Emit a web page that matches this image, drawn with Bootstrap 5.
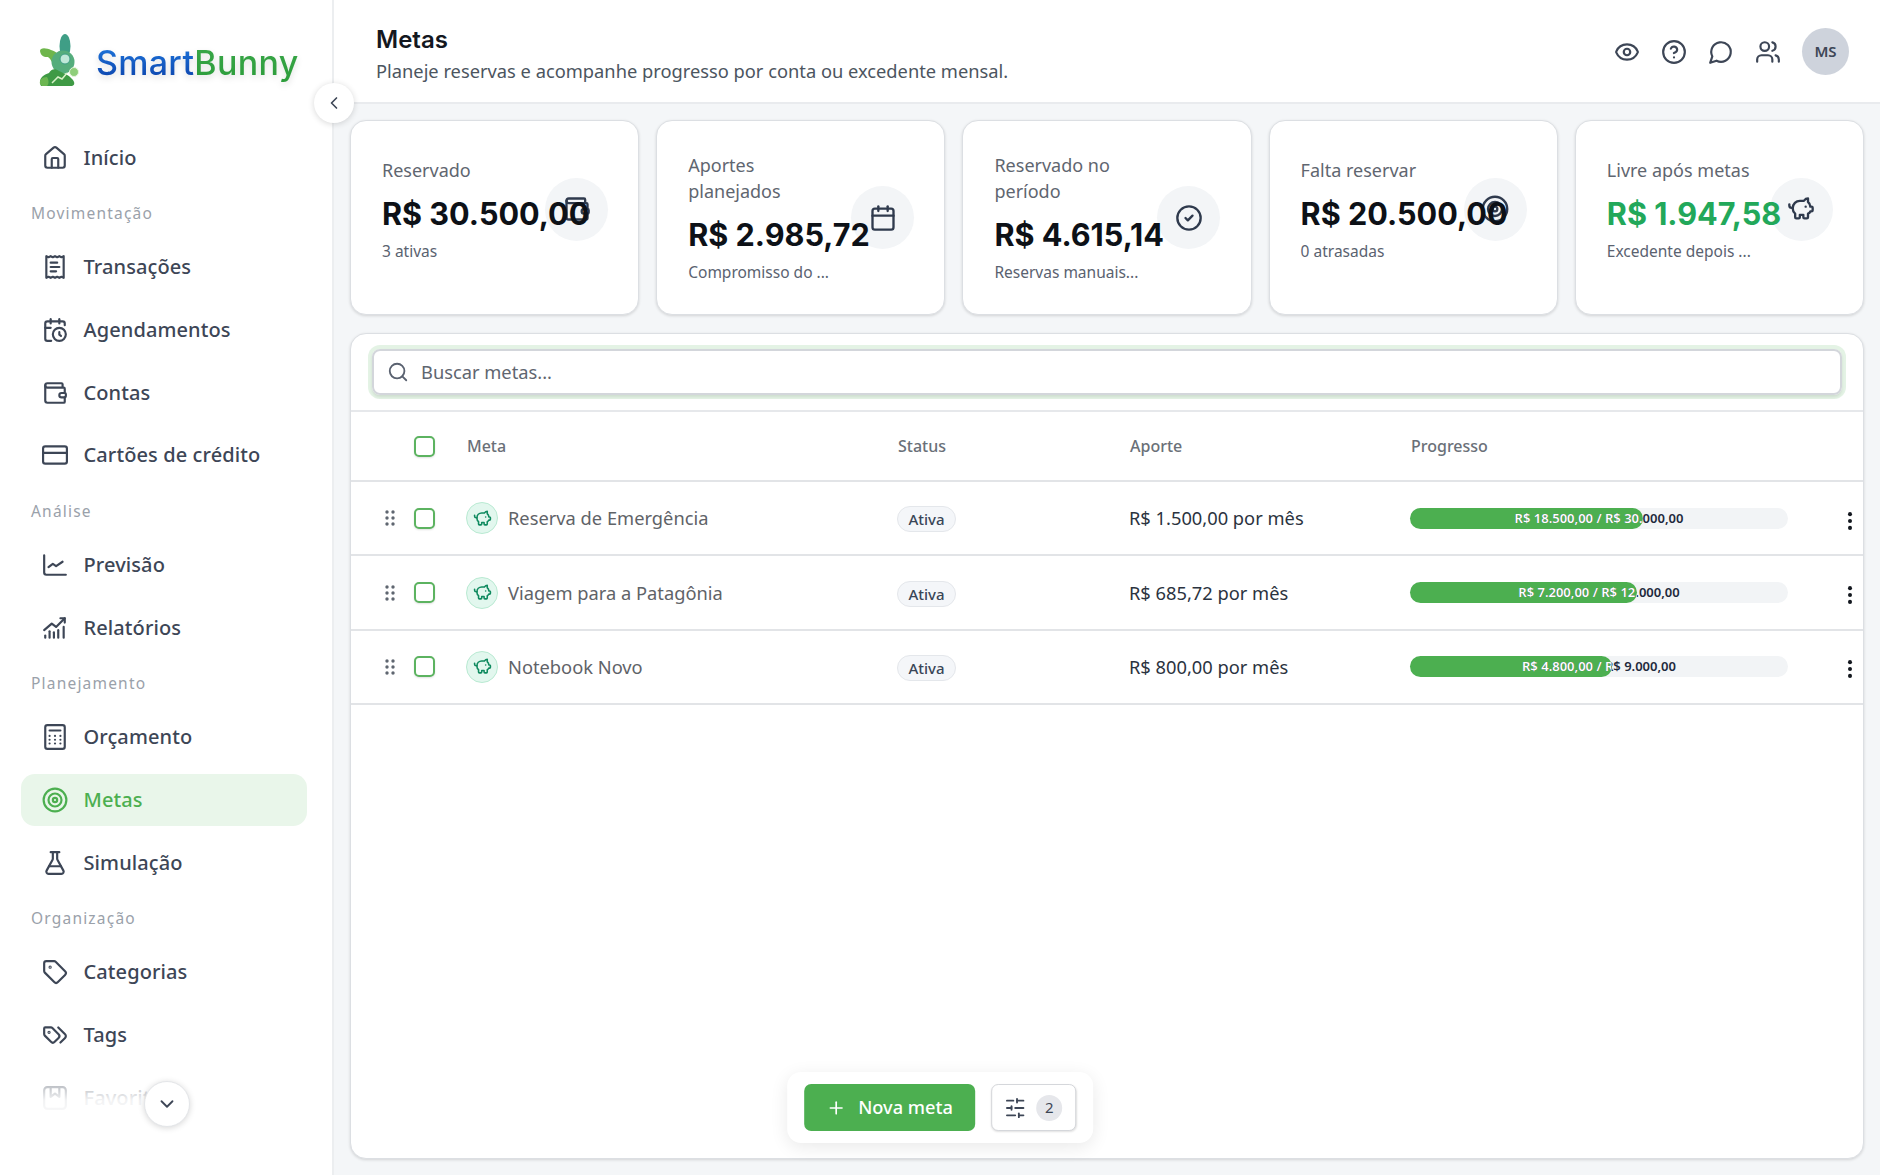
<!DOCTYPE html>
<html lang="pt-BR">

<head>
    <meta charset="UTF-8">
    <title>Metas - SmartBunny</title>
    <link rel="stylesheet" href="https://cdn.jsdelivr.net/npm/bootstrap@5.3.0/dist/css/bootstrap.min.css">
    <style>
        body { font-family: "Noto Sans", sans-serif; background: #f4f6f8; color: #2b3340; height: 1175px; }
        .ic { fill: none; stroke: currentColor; stroke-width: 2; stroke-linecap: round; stroke-linejoin: round; flex: none; }

        /* sidebar */
        .side { width: 334px; background: #fff; border-right: 2px solid #eceef0; height: 1175px; }
        .side-scroll { height: 1175px; overflow: hidden; }
        .brand { height: 131.500px; padding: 33px 0 0 39px; }
        .brand-name { font-family: Inter, sans-serif; font-weight: 500; font-size: 34px; line-height: 48px; letter-spacing: .3px; margin: 6px 0 0 17px; filter: drop-shadow(0 3px 3px rgba(0,0,0,.12)); }
        .brand-a { background: linear-gradient(180deg, #1f7ae0, #0b3fa8); -webkit-background-clip: text; background-clip: text; color: transparent; }
        .brand-b { background: linear-gradient(180deg, #3aa84a, #2c9c3a); -webkit-background-clip: text; background-clip: text; color: transparent; }
        .side-link { display: flex; align-items: center; height: 52px; margin: 0 25px 10.7px 21px; padding-left: 21px; gap: 15.500px; border-radius: 14px; color: #3d4656; font-size: 20px; letter-spacing: .1px; font-weight: 500; text-decoration: none; }
        .side-link.on { background: #e9f6ea; color: #4caf50; }
        .side-head { height: 38px; margin-bottom: 9px; padding-left: 31px; line-height: 38px; font-size: 15.500px; letter-spacing: 1.200px; color: #9aa1aa; }
        .side-fade { left: 0; bottom: 0; width: 332px; height: 125px; background: linear-gradient(180deg, rgba(255,255,255,0), rgba(255,255,255,.93) 40%, #fff 60%); pointer-events: none; }
        .round-btn { width: 40px; height: 40px; background: #fff; border: 0; border-radius: 50%; box-shadow: 0 1px 6px rgba(0,0,0,.16); color: #3d4656; display: flex; align-items: center; justify-content: center; padding: 0; }
        .collapse-btn { left: 314px; top: 83px; z-index: 5; }
        .more-btn { left: 144px; top: 1081px; width: 46px; height: 46px; border: 1px solid #e4e6e9; }

        /* header */
        .top { height: 104px; background: #fff; border-bottom: 2px solid #e9ebee; padding: 0 31px 0 42px; }
        .top-text { margin-top: 6px; }
        .top-title { font-family: Inter, sans-serif; font-weight: 600; font-size: 24px; line-height: 32px; color: #14181f; margin: 0; }
        .top-sub { font-size: 18.300px; line-height: 28px; color: #4c5560; margin: 1px 0 0; }
        .top-actions { color: #3d4656; gap: 21px; margin-top: 1px; }
        .avatar { width: 47px; height: 47px; background: #ced3dc; color: #3d4656; border-radius: 50%; font-size: 15px; font-weight: 600; }

        /* cards */
        .main-wrap { padding: 16px 16px 17px; gap: 18px; }
        .stats { gap: 17px; }
        .stat { flex: 1 1 0; height: 195px; background: #fff; border: 1px solid #dcdfe3; border-radius: 16px; box-shadow: 0 1px 3px rgba(0,0,0,.14); padding: 0 31px; min-width: 0; }
        .stat-single { padding-bottom: 17px; }
        .stat-text { width: 153px; flex: none; position: relative; z-index: 1; }
        .stat-label { font-size: 18px; line-height: 26px; color: #5f6670; }
        .stat-value { font-family: Inter, sans-serif; font-weight: 700; font-size: 30.600px; line-height: 42px; color: #0d1117; white-space: nowrap; margin: 10px 0 5px; }
        .stat-value.good { color: #22a85a; }
        .stat-note { font-size: 15.500px; line-height: 22px; color: #5a6270; white-space: nowrap; }
        .stat-ic { width: 63px; height: 63px; background: #f3f5f7; border-radius: 50%; color: #2f3a4d; flex: none; margin-left: 10px; }

        /* table panel */
        .panel { background: #fff; border: 1px solid #dcdfe3; border-radius: 16px; box-shadow: 0 1px 3px rgba(0,0,0,.14); height: 826px; overflow: hidden; }
        .search-bar { height: 78px; padding: 15px 21px 0; border-bottom: 2px solid #e6e8eb; }
        .search-box { height: 46px; border: 2px solid #d3d6db; border-radius: 8px; box-shadow: 0 0 0 4px rgba(76,175,80,.15), 0 2px 3px rgba(0,0,0,.1); padding-left: 13px; gap: 10px; color: #5a6270; }
        .search-box input { border: 0; outline: 0; flex: 1; font-size: 18.300px; color: #5a6270; background: transparent; }
        .search-box input::placeholder { color: #5f6670; opacity: 1; }
        .goal-table { table-layout: fixed; width: 100%; margin: 0; }
        .goal-table th { height: 69px; font-size: 16px; font-weight: 500; color: #6a7078; border-bottom: 2px solid #e2e4e7; padding: 0; vertical-align: middle; }
        .goal-table th + th + th { padding-left: 1px; }
        .goal-table td { height: 74.400px; border-bottom: 2px solid #e2e4e7; padding: 0; vertical-align: middle; font-size: 18.300px; color: #2b3340; }
        .w-sel { width: 116px; }
        .w-meta { width: 430px; }
        .w-status { width: 232px; }
        .w-aporte { width: 281px; }
        .w-prog { width: 377px; }
        .sel-cell { display: flex; align-items: center; padding-left: 29px; gap: 14px; }
        .sel-cell.head { padding-left: 63px; }
        .grip { color: #5f6670; fill: currentColor; stroke: none; }
        .form-check-input.pick { width: 21px; height: 21px; margin: 0; border: 2px solid #5cb360; border-radius: 5px; box-shadow: 0 1px 2px rgba(0,0,0,.12); }
        .goal-ic { width: 32px; height: 32px; background: #e2f7ee; border: 1px solid #b9ead2; border-radius: 50%; color: #0f8a5f; flex: none; margin-left: -1px; }
        .goal-name { color: #5f6368; margin-left: 10px; }
        .state { display: inline-block; height: 26px; line-height: 24px; padding: 0 10.500px; font-size: 15px; font-weight: 500; color: #3a4657; background: #f4f6f9; border: 1px solid #e4e7eb; border-radius: 13px; }
        .bar { height: 21px; background: #f2f4f6; border-radius: 11px; position: relative; width: 378px; }
        .bar-text { position: absolute; left: 0; top: 0; width: 100%; height: 21px; line-height: 21px; text-align: center; font-size: 13px; font-weight: 600; color: #1f2a3d; white-space: nowrap; }
        .bar-text.over { color: #fff; }
        .bar-fill { height: 21px; background: #4caf50; border-radius: 11px; }
        .kebab { color: #14181f; margin-left: 52px; }

        /* floating actions */
        .float-bar { bottom: 32px; background: #fff; border-radius: 14px; box-shadow: 0 4px 18px rgba(0,0,0,.09); padding: 12px 17px; gap: 16px; z-index: 4; }
        .btn-new { height: 47px; background: #4caf50; border: 0; border-radius: 7px; color: #fff; font-size: 18.200px; font-weight: 500; padding: 0 22px; gap: 12px; }
        .btn-new:hover { background: #4caf50; color: #fff; }
        .btn-filter { height: 47px; width: 85px; background: #fff; border: 1px solid #d5d7db; border-radius: 7px; box-shadow: 0 1px 2px rgba(0,0,0,.12); gap: 10px; color: #3d4656; padding: 0; }
        .count { width: 26px; height: 26px; background: #e6e7eb; border-radius: 50%; font-size: 15px; color: #3d4656; }
    </style>
</head>

<body class="position-relative overflow-hidden">
    <!-- icones no estilo lucide -->
    <svg width="0" height="0" class="position-absolute">
        <symbol id="i-home" viewBox="0 0 24 24"><path d="M15 21v-8a1 1 0 0 0-1-1h-4a1 1 0 0 0-1 1v8"/><path d="M3 10a2 2 0 0 1 .709-1.528l7-5.999a2 2 0 0 1 2.582 0l7 5.999A2 2 0 0 1 21 10v9a2 2 0 0 1-2 2H5a2 2 0 0 1-2-2z"/></symbol>
        <symbol id="i-receipt" viewBox="0 0 24 24"><path d="M4 2v20l2-1 2 1 2-1 2 1 2-1 2 1 2-1 2 1V2l-2 1-2-1-2 1-2-1-2 1-2-1-2 1Z"/><path d="M14 8H8"/><path d="M16 12H8"/><path d="M13 16H8"/></symbol>
        <symbol id="i-calclock" viewBox="0 0 24 24"><path d="M21 7.5V6a2 2 0 0 0-2-2H5a2 2 0 0 0-2 2v14a2 2 0 0 0 2 2h3.5"/><path d="M16 2v4"/><path d="M8 2v4"/><path d="M3 10h5"/><path d="M17.5 17.5 16 16.3V14"/><circle cx="16" cy="16" r="6"/></symbol>
        <symbol id="i-wallet" viewBox="0 0 24 24"><path d="M19 7V4a1 1 0 0 0-1-1H5a2 2 0 0 0 0 4h15a1 1 0 0 1 1 1v4h-3a2 2 0 0 0 0 4h3a1 1 0 0 0 1-1v-2a1 1 0 0 0-1-1"/><path d="M3 5v14a2 2 0 0 0 2 2h15a1 1 0 0 0 1-1v-4"/></symbol>
        <symbol id="i-card" viewBox="0 0 24 24"><rect width="22" height="16" x="1" y="4" rx="2"/><path d="M1 10h22"/></symbol>
        <symbol id="i-line" viewBox="0 0 24 24"><path d="M2 3v16a2 2 0 0 0 2 2h18"/><path d="m6 14 4-3 3 2 6-4"/></symbol>
        <symbol id="i-report" viewBox="0 0 24 24"><path d="M2 14 9 8l4 3 8-8"/><path d="M17 3h4v4"/><path d="M3 21v-2"/><path d="M7 21v-6"/><path d="M11 21v-5"/><path d="M15 21v-7"/><path d="M20 21v-10"/></symbol>
        <symbol id="i-calc" viewBox="0 0 24 24"><rect width="18" height="22" x="3" y="1" rx="2"/><path d="M7 6h10"/><path d="M7 11h.01"/><path d="M12 11h.01"/><path d="M17 11h.01"/><path d="M7 14.500h.01"/><path d="M12 14.500h.01"/><path d="M17 14.500h.01"/><path d="M7 18h.01"/><path d="M12 18h.01"/><path d="M17 18h.01"/></symbol>
        <symbol id="i-target" viewBox="0 0 24 24"><circle cx="12" cy="12" r="10.500"/><circle cx="12" cy="12" r="6"/><circle cx="12" cy="12" r="2"/></symbol>
        <symbol id="i-flask" viewBox="0 0 24 24"><path d="M14 2v6a2 2 0 0 0 .245.96l5.51 10.080A2 2 0 0 1 18 22H6a2 2 0 0 1-1.755-2.960l5.510-10.080A2 2 0 0 0 10 8V2"/><path d="M6.453 15h11.094"/><path d="M8 2h8"/></symbol>
        <symbol id="i-tag" viewBox="0 0 24 24"><path d="M12.586 2.586A2 2 0 0 0 11.172 2H4a2 2 0 0 0-2 2v7.172a2 2 0 0 0 .586 1.414l8.704 8.704a2.426 2.426 0 0 0 3.420 0l6.580-6.580a2.426 2.426 0 0 0 0-3.420z"/><circle cx="7.500" cy="7.500" r=".5"/></symbol>
        <symbol id="i-tags" viewBox="0 0 24 24"><path d="m15 5 6.300 6.300a2.400 2.400 0 0 1 0 3.400L17 19"/><path d="M9.586 5.586A2 2 0 0 0 8.172 5H3a1 1 0 0 0-1 1v5.172a2 2 0 0 0 .586 1.414L8.290 18.290a2.426 2.426 0 0 0 3.420 0l3.580-3.580a2.426 2.426 0 0 0 0-3.420z"/><circle cx="6.500" cy="9.500" r=".5"/></symbol>
        <symbol id="i-bookmark" viewBox="0 0 24 24"><rect width="20" height="20" x="2" y="2" rx="3"/><path d="M8 3v8l4-3 4 3V3"/></symbol>
        <symbol id="i-eye" viewBox="0 0 24 24"><path d="M2.062 12.348a1 1 0 0 1 0-.696 10.750 10.750 0 0 1 19.876 0 1 1 0 0 1 0 .696 10.750 10.750 0 0 1-19.876 0"/><circle cx="12" cy="12" r="3"/></symbol>
        <symbol id="i-help" viewBox="0 0 24 24"><circle cx="12" cy="12" r="10"/><path d="M9.090 9a3 3 0 0 1 5.830 1c0 2-3 3-3 3"/><path d="M12 17h.01"/></symbol>
        <symbol id="i-chat" viewBox="0 0 24 24"><path d="M7.900 20A9 9 0 1 0 4 16.100L2 22Z"/></symbol>
        <symbol id="i-users" viewBox="0 0 24 24"><path d="M16 21v-2a4 4 0 0 0-4-4H6a4 4 0 0 0-4 4v2"/><circle cx="9" cy="7" r="4"/><path d="M22 21v-2a4 4 0 0 0-3-3.870"/><path d="M16 3.130a4 4 0 0 1 0 7.750"/></symbol>
        <symbol id="i-calendar" viewBox="0 0 24 24"><path d="M8 2v4"/><path d="M16 2v4"/><rect width="18" height="18" x="3" y="4" rx="2"/><path d="M3 10h18"/></symbol>
        <symbol id="i-check" viewBox="0 0 24 24"><circle cx="12" cy="12" r="10"/><path d="m9 12 2 2 4-4"/></symbol>
        <symbol id="i-pig" viewBox="0 0 24 24"><path d="M11 17h3v2a1 1 0 0 0 1 1h2a1 1 0 0 0 1-1v-3a3.160 3.160 0 0 0 2-2h1a1 1 0 0 0 1-1v-2a1 1 0 0 0-1-1h-1a5 5 0 0 0-2-4V3a4 4 0 0 0-3.200 1.600l-.3.4H11a6 6 0 0 0-6 6v1a5 5 0 0 0 2 4v3a1 1 0 0 0 1 1h2a1 1 0 0 0 1-1z"/><path d="M16 10h.01"/><path d="M2 8v1a2 2 0 0 0 2 2h1"/></symbol>
        <symbol id="i-search" viewBox="0 0 24 24"><circle cx="11" cy="11" r="8"/><path d="m21 21-4.300-4.300"/></symbol>
        <symbol id="i-sliders" viewBox="0 0 24 24"><path d="M21 4h-7"/><path d="M10 4H3"/><path d="M21 12h-9"/><path d="M8 12H3"/><path d="M21 20h-5"/><path d="M12 20H3"/><path d="M14 2v4"/><path d="M8 10v4"/><path d="M16 18v4"/></symbol>
        <symbol id="i-plus" viewBox="0 0 24 24"><path d="M5 12h14"/><path d="M12 5v14"/></symbol>
        <symbol id="i-left" viewBox="0 0 24 24"><path d="m15 18-6-6 6-6"/></symbol>
        <symbol id="i-down" viewBox="0 0 24 24"><path d="m6 9 6 6 6-6"/></symbol>
        <symbol id="i-grip" viewBox="0 0 20 20"><circle cx="7" cy="4" r="1.700"/><circle cx="13" cy="4" r="1.700"/><circle cx="7" cy="10" r="1.700"/><circle cx="13" cy="10" r="1.700"/><circle cx="7" cy="16" r="1.700"/><circle cx="13" cy="16" r="1.700"/></symbol>
        <symbol id="i-more" viewBox="0 0 24 24"><circle cx="12" cy="4.500" r="2.200"/><circle cx="12" cy="12" r="2.200"/><circle cx="12" cy="19.500" r="2.200"/></symbol>
    </svg>

    <div class="d-flex">
        <aside class="side flex-shrink-0">
            <div class="side-scroll">
                <div class="brand d-flex align-items-start">
                    <svg width="40" height="54" viewBox="0 0 40 54" class="flex-shrink-0">
                        <ellipse cx="26" cy="13" rx="5.500" ry="12" fill="#3f9e86"/>
                        <path d="M1 18C1 14 8 15 12 17c6 2 10 6 12 9l-8 8c-3-4-4-8-7-10-3 0-7 0-8-6z" fill="#6fb64c"/>
                        <circle cx="24" cy="29" r="11.500" fill="#55ad7c"/>
                        <circle cx="26" cy="26" r="5" fill="#bfe8d8" stroke="#3f9e86"/>
                        <path d="M2 53c-3-6 1-11 8-13 2-4 6-5 10-2 6 3 10 4 13 8 3 3 3 6 0 7z" fill="#3f9a45"/>
                        <path d="M1 51c-1-4 2-7 7-7 2 3 2 7 0 9H3z" fill="#6cb651"/>
                        <circle cx="35" cy="39" r="4.500" fill="#8fce7a" stroke="#e6f5dc"/>
                        <path d="M13 50l6-6 4 2 5-6" fill="none" stroke="#d8f0c8" stroke-width="1.500"/>
                    </svg>
                    <div class="brand-name"><span class="brand-a">Smart</span><span class="brand-b">Bunny</span></div>
                </div>
                <a class="side-link" href="#"><svg class="ic" width="26" height="26"><use href="#i-home"/></svg>Início</a>
                <div class="side-head">Movimentação</div>
                <a class="side-link" href="#"><svg class="ic" width="26" height="26"><use href="#i-receipt"/></svg>Transações</a>
                <a class="side-link" href="#"><svg class="ic" width="26" height="26"><use href="#i-calclock"/></svg>Agendamentos</a>
                <a class="side-link" href="#"><svg class="ic" width="26" height="26"><use href="#i-wallet"/></svg>Contas</a>
                <a class="side-link" href="#"><svg class="ic" width="26" height="26"><use href="#i-card"/></svg>Cartões de crédito</a>
                <div class="side-head">Análise</div>
                <a class="side-link" href="#"><svg class="ic" width="26" height="26"><use href="#i-line"/></svg>Previsão</a>
                <a class="side-link" href="#"><svg class="ic" width="26" height="26"><use href="#i-report"/></svg>Relatórios</a>
                <div class="side-head">Planejamento</div>
                <a class="side-link" href="#"><svg class="ic" width="26" height="26"><use href="#i-calc"/></svg>Orçamento</a>
                <a class="side-link on" href="#"><svg class="ic" width="26" height="26"><use href="#i-target"/></svg>Metas</a>
                <a class="side-link" href="#"><svg class="ic" width="26" height="26"><use href="#i-flask"/></svg>Simulação</a>
                <div class="side-head">Organização</div>
                <a class="side-link" href="#"><svg class="ic" width="26" height="26"><use href="#i-tag"/></svg>Categorias</a>
                <a class="side-link" href="#"><svg class="ic" width="26" height="26"><use href="#i-tags"/></svg>Tags</a>
                <a class="side-link" href="#"><svg class="ic" width="26" height="26"><use href="#i-bookmark"/></svg>Favoritos</a>
            </div>
            <div class="side-fade position-absolute"></div>
            <button class="round-btn more-btn position-absolute"><svg class="ic" width="22" height="22"><use href="#i-down"/></svg></button>
            <button class="round-btn collapse-btn position-absolute"><svg class="ic" width="20" height="20"><use href="#i-left"/></svg></button>
        </aside>

        <main class="flex-grow-1 d-flex flex-column" style="min-width:0">
            <header class="top d-flex align-items-center justify-content-between">
                <div class="top-text">
                    <h1 class="top-title">Metas</h1>
                    <p class="top-sub">Planeje reservas e acompanhe progresso por conta ou excedente mensal.</p>
                </div>
                <div class="top-actions d-flex align-items-center">
                    <svg class="ic" width="26" height="26"><use href="#i-eye"/></svg>
                    <svg class="ic" width="26" height="26"><use href="#i-help"/></svg>
                    <svg class="ic" width="26" height="26"><use href="#i-chat"/></svg>
                    <svg class="ic" width="26" height="26"><use href="#i-users"/></svg>
                    <div class="avatar d-flex align-items-center justify-content-center">MS</div>
                </div>
            </header>

            <div class="main-wrap d-flex flex-column">
                <div class="stats d-flex">
                    <div class="stat stat-single d-flex align-items-center">
                        <div class="stat-text">
                            <div class="stat-label">Reservado</div>
                            <div class="stat-value">R$ 30.500,00</div>
                            <div class="stat-note">3 ativas</div>
                        </div>
                        <div class="stat-ic d-flex align-items-center justify-content-center"><svg class="ic" width="28" height="28"><use href="#i-wallet"/></svg></div>
                    </div>
                    <div class="stat d-flex align-items-center">
                        <div class="stat-text">
                            <div class="stat-label">Aportes planejados</div>
                            <div class="stat-value">R$ 2.985,72</div>
                            <div class="stat-note">Compromisso do ...</div>
                        </div>
                        <div class="stat-ic d-flex align-items-center justify-content-center"><svg class="ic" width="28" height="28"><use href="#i-calendar"/></svg></div>
                    </div>
                    <div class="stat d-flex align-items-center">
                        <div class="stat-text">
                            <div class="stat-label">Reservado no período</div>
                            <div class="stat-value">R$ 4.615,14</div>
                            <div class="stat-note">Reservas manuais...</div>
                        </div>
                        <div class="stat-ic d-flex align-items-center justify-content-center"><svg class="ic" width="28" height="28"><use href="#i-check"/></svg></div>
                    </div>
                    <div class="stat stat-single d-flex align-items-center">
                        <div class="stat-text">
                            <div class="stat-label">Falta reservar</div>
                            <div class="stat-value">R$ 20.500,00</div>
                            <div class="stat-note">0 atrasadas</div>
                        </div>
                        <div class="stat-ic d-flex align-items-center justify-content-center"><svg class="ic" width="28" height="28"><use href="#i-target"/></svg></div>
                    </div>
                    <div class="stat stat-single d-flex align-items-center">
                        <div class="stat-text">
                            <div class="stat-label">Livre após metas</div>
                            <div class="stat-value good">R$ 1.947,58</div>
                            <div class="stat-note">Excedente depois ...</div>
                        </div>
                        <div class="stat-ic d-flex align-items-center justify-content-center"><svg class="ic" width="28" height="28"><use href="#i-pig"/></svg></div>
                    </div>
                </div>

                <section class="panel">
                    <div class="search-bar">
                        <label class="search-box d-flex align-items-center">
                            <svg class="ic" width="22" height="22"><use href="#i-search"/></svg>
                            <input type="text" placeholder="Buscar metas...">
                        </label>
                    </div>
                    <table class="goal-table">
                        <thead>
                            <tr>
                                <th class="w-sel"><div class="sel-cell head"><input class="form-check-input pick" type="checkbox"></div></th>
                                <th class="w-meta">Meta</th>
                                <th class="w-status">Status</th>
                                <th class="w-aporte">Aporte</th>
                                <th class="w-prog">Progresso</th>
                                <th></th>
                            </tr>
                        </thead>
                        <tbody id="rows"></tbody>
                    </table>
                </section>
            </div>
        </main>
    </div>

    <div class="float-bar d-flex position-absolute start-50 translate-middle-x">
        <button class="btn btn-new d-flex align-items-center"><svg class="ic" width="20" height="20"><use href="#i-plus"/></svg>Nova meta</button>
        <button class="btn btn-filter d-flex align-items-center justify-content-center"><svg class="ic" width="22" height="22"><use href="#i-sliders"/></svg><span class="count d-flex align-items-center justify-content-center">2</span></button>
    </div>

    <script>
        const goals = [
            { name: 'Reserva de Emergência', aporte: 'R$ 1.500,00 por mês', prog: 'R$ 18.500,00 / R$ 30.000,00', pct: 61.67 },
            { name: 'Viagem para a Patagônia', aporte: 'R$ 685,72 por mês', prog: 'R$ 7.200,00 / R$ 12.000,00', pct: 60 },
            { name: 'Notebook Novo', aporte: 'R$ 800,00 por mês', prog: 'R$ 4.800,00 / R$ 9.000,00', pct: 53.33 }
        ];
        document.getElementById('rows').innerHTML = goals.map(g => `
            <tr>
                <td><div class="sel-cell"><svg class="grip" width="20" height="20"><use href="#i-grip"/></svg><input class="form-check-input pick" type="checkbox"></div></td>
                <td><div class="d-flex align-items-center"><span class="goal-ic d-flex align-items-center justify-content-center"><svg class="ic" width="19" height="19"><use href="#i-pig"/></svg></span><span class="goal-name">${g.name}</span></div></td>
                <td><span class="state">Ativa</span></td>
                <td>${g.aporte}</td>
                <td><div class="bar"><div class="bar-fill" style="width:${g.pct}%"></div><span class="bar-text">${g.prog}</span><span class="bar-text over" style="clip-path:inset(0 ${100 - g.pct}% 0 0)" aria-hidden="true">${g.prog}</span></div></td>
                <td><svg class="kebab" width="22" height="22" fill="currentColor"><use href="#i-more"/></svg></td>
            </tr>`).join('');
    </script>
    <script src="https://cdn.jsdelivr.net/npm/bootstrap@5.3.0/dist/js/bootstrap.bundle.min.js"></script>
</body>

</html>
